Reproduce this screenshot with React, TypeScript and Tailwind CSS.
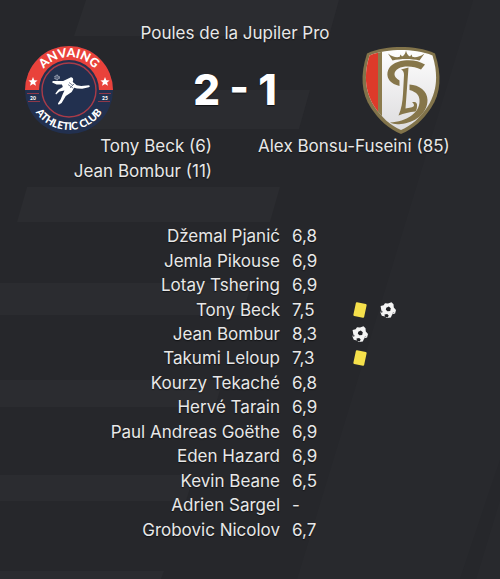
type EventKind = 'card' | 'goal';

type Player = {
  name: string;
  rating: string;
  events?: EventKind[];
};

const players: Player[] = [
  { name: 'Džemal Pjanić', rating: '6,8' },
  { name: 'Jemla Pikouse', rating: '6,9' },
  { name: 'Lotay Tshering', rating: '6,9' },
  { name: 'Tony Beck', rating: '7,5', events: ['card', 'goal'] },
  { name: 'Jean Bombur', rating: '8,3', events: ['goal'] },
  { name: 'Takumi Leloup', rating: '7,3', events: ['card'] },
  { name: 'Kourzy Tekaché', rating: '6,8' },
  { name: 'Hervé Tarain', rating: '6,9' },
  { name: 'Paul Andreas Goëthe', rating: '6,9' },
  { name: 'Eden Hazard', rating: '6,9' },
  { name: 'Kevin Beane', rating: '6,5' },
  { name: 'Adrien Sargel', rating: '-' },
  { name: 'Grobovic Nicolov', rating: '6,7' },
];

const homeScorers = ['Tony Beck (6)', 'Jean Bombur (11)'];
const awayScorers = ['Alex Bonsu-Fuseini (85)'];

function Backdrop() {
  return (
    <svg
      className="absolute inset-0 -z-10 h-full w-full"
      viewBox="0 0 500 579"
      preserveAspectRatio="xMidYMin slice"
      aria-hidden="true"
    >
      <g fill="#2b2c30">
        <path d="M86 0H339L329 36H74Z" />
        <path d="M58 90H310L299 129H47Z" />
        <path d="M27 187H280L270 222H17Z" />
        <path d="M0 283H252L242 315H0Z" />
        <path d="M0 380H223L215 407H0Z" />
        <path d="M0 475H194L186 501H0Z" />
        <path d="M0 571H164L161 579H0Z" />
      </g>
      <path d="M473 0H500V460L460 579H297Z" fill="#28292d" />
      <path d="M500 500V579H476Z" fill="#28292d" />
    </svg>
  );
}

function AnvaingCrest() {
  return (
    <svg className="size-[88px]" viewBox="0 0 88 88" role="img" aria-label="Anvaing Athletic Club">
      <defs>
        <path id="crest-top" d="M11 44A33 33 0 0 1 77 44" />
        <path id="crest-bottom" d="M4 44A40 40 0 0 0 84 44" />
      </defs>
      <circle cx="44" cy="44" r="44" fill="#22304f" />
      <path d="M0 44A44 44 0 0 1 88 44Z" fill="#e9423b" />
      <circle cx="44" cy="44" r="30" fill="#22304f" />
      <circle cx="44" cy="44" r="27" fill="none" stroke="#a93b48" strokeWidth="1.4" />
      <path d="M2 47.5H14M3 55.5H15M74 47.5H86M73 55.5H85" stroke="#a93b48" strokeWidth="0.8" />
      <g fill="#fff">
        <path d="M8 31l1.300 3.200 3.300.2-2.500 2.100.9 3.200-3-1.800-3 1.800.9-3.200-2.500-2.100 3.300-.2z" />
        <path d="M80 31l1.300 3.200 3.300.2-2.500 2.100.9 3.200-3-1.800-3 1.800.9-3.200-2.500-2.100 3.300-.2z" />
        <path d="M44.500 32c1.500-1.600 4-.4 3.700 2l-.5 2 4 3.300 4.500.7 7.800-.8 1 1-1.200 1-6.600 1.500-5.200-.2-2.900-.8-2.400 4.200-5.900 4-4.200 7.200-2.900 1.700-.8-1.200 2.700-4 2.300-5.800 1.600-3.400-5 1-3.400 3-.7-1 2.800-3.600 4.600-2.700-.8-2.500-5.400-.2-4.400-1.800.5-1.600 4.700.1 5.700-.1z" />
      </g>
      <circle cx="32" cy="31.5" r="2.300" fill="#5b6680" stroke="#c9ced8" strokeWidth="0.900" strokeDasharray="1.500 .8" />
      <path d="M44 36.500l4 3M43 38.500l5 3.500M49 38l-4 4" stroke="#5b6680" strokeWidth="0.800" />
      <g fill="#fff" textAnchor="middle" className="font-['Lato'] font-black text-shadow-none">
        <text fontSize="12.500">
          <textPath href="#crest-top" startOffset="50%">ANVAING</textPath>
        </text>
        <text fontSize="10.500">
          <textPath href="#crest-bottom" startOffset="50%">ATHLETIC CLUB</textPath>
        </text>
        <text x="8" y="53.5" fontSize="5">20</text>
        <text x="80" y="53.5" fontSize="5">25</text>
      </g>
    </svg>
  );
}

function StandardCrest() {
  return (
    <svg className="size-[88px]" viewBox="0 0 88 88" role="img" aria-label="Standard">
      <defs>
        <linearGradient id="shield-white" x1="0" y1="0" x2="0" y2="1">
          <stop offset="0" stopColor="#fff" />
          <stop offset="1" stopColor="#dcdbdd" />
        </linearGradient>
        <clipPath id="shield-inner">
          <path d="M44 4C54 4 66 5.500 75.500 9.500C81.500 29 80 45 71 60C64 71 54 80 44 84C34 80 24 71 17 60C8 45 6.500 29 12.500 9.500C22 5.500 34 4 44 4Z" />
        </clipPath>
      </defs>
      <path
        d="M44 1C55 1 68 2.500 78 7.500C85 29 84 47 74 62C66 74 56 83 44 88C32 83 22 74 14 62C4 47 3 29 10 7.500C20 2.500 33 1 44 1Z"
        fill="#81734a"
      />
      <g clipPath="url(#shield-inner)">
        <rect width="88" height="88" fill="url(#shield-white)" />
        <rect width="21" height="88" fill="#dd3a2a" />
        <rect x="21" width="4" height="88" fill="#8b7b4d" />
      </g>
      <g fill="#86764a">
        <path d="M31 7.500C35 11 39 11.500 42.500 11L43.500 8.500L45 10.500C47.500 9.500 48.500 7 49 4.500C49.500 7 50.500 9.500 53 10.500L54.500 8.500L55.500 11C59 11.500 63 11 67.500 7.500L62.500 14.500C54 12.500 44 12.500 35.500 14.500Z" />
        <path d="M68 18.500L64 23.500C57 20 47 19.500 41.500 22.500C36 25.500 36 31 42.500 34.500V40C34 38 29.500 33 30.500 26.500C31.500 20 38 15.500 47 14.500C55 13.500 62 15 68 18.500Z" />
        <path d="M44 23.500L51.500 21.500L48.500 62.500C52 62 56.500 61.500 57 59.500C57 58 56.500 57 55 56.500C58.500 55 60.500 57 60 60C60 62 59.500 64 58.500 65.500C52 66 47 67.500 41.500 69.500C44.500 63 45.500 56 46 48L47 29C47 26 46 24.500 44 23.500Z" />
        <path d="M52.500 38.500C62 39 70.500 45 70.500 54C70.500 68 57 77 44 78C39 78.500 36 78 33 76.500C50 75.500 62 67 62.500 56C63 50 60 46 52.500 44Z" />
      </g>
    </svg>
  );
}

function CardIcon() {
  return (
    <svg className="size-4" viewBox="0 0 16 16" role="img" aria-label="Yellow card">
      <rect x="2.500" y="1" width="11" height="14" rx="1" fill="#f5e04b" transform="rotate(12 8 8)" />
    </svg>
  );
}

function BallIcon() {
  return (
    <svg className="size-4" viewBox="0 0 16 16" role="img" aria-label="Goal">
      <path
        d="M5 1.300L8 1.500l3.500-1.200 2 2 .3 3.300L16 8l-.9 3.500-2.800.8-1.500 3.200-4 .4-2-1.400-3-.7L.4 10.500l.9-2.200L.6 4l3-.7z"
        fill="#f4f4f4"
      />
      <path d="M6.300 5.800l2.500-1.300 2 1.800-.6 2.700-2.700.3-1.700-1.600zM4.500 12.500l2.700-.4 1.500 1.500-1 1.900-2.800-.8z" fill="#1f2024" />
      <path d="M1.300 8.300l1.300 1-.4 1.500-1.700-.4zM12 12l1-1.500 1.500-.4" fill="#55565a" />
    </svg>
  );
}

export default function App() {
  return (
    <main className="relative isolate min-h-screen overflow-hidden bg-[#26272b] pt-[21px] pb-9 font-['Inter',sans-serif] text-[17px] leading-[25px] text-[#e8e8e8] text-shadow-[0_1px_1px_#111214]">
      <Backdrop />

      <header className="pr-[6%]">
        <p className="text-center">Poules de la Jupiler Pro</p>
        <div className="flex items-center justify-between px-[25px]">
          <AnvaingCrest />
          <h1 className="text-[42px] leading-none font-extrabold text-white">2 - 1</h1>
          <StandardCrest />
        </div>
        <div className="grid grid-cols-2 gap-[46px]">
          <ul className="text-right">
            {homeScorers.map((scorer) => (
              <li key={scorer}>{scorer}</li>
            ))}
          </ul>
          <ul className="whitespace-nowrap">
            {awayScorers.map((scorer) => (
              <li key={scorer}>{scorer}</li>
            ))}
          </ul>
        </div>
      </header>

      <table className="mt-10 h-[318px] w-full table-fixed leading-6" aria-label="Player ratings">
        <tbody>
          {players.map(({ name, rating, events = [] }) => (
            <tr key={name}>
              <th scope="row" className="w-[56%] p-0 text-right font-normal">
                {name}
              </th>
              <td className="w-[12%] p-0 pl-3">{rating}</td>
              <td className="p-0 pl-3">
                <div className="flex gap-3">
                  {events.map((kind) => (kind === 'card' ? <CardIcon key={kind} /> : <BallIcon key={kind} />))}
                </div>
              </td>
            </tr>
          ))}
        </tbody>
      </table>
    </main>
  );
}
